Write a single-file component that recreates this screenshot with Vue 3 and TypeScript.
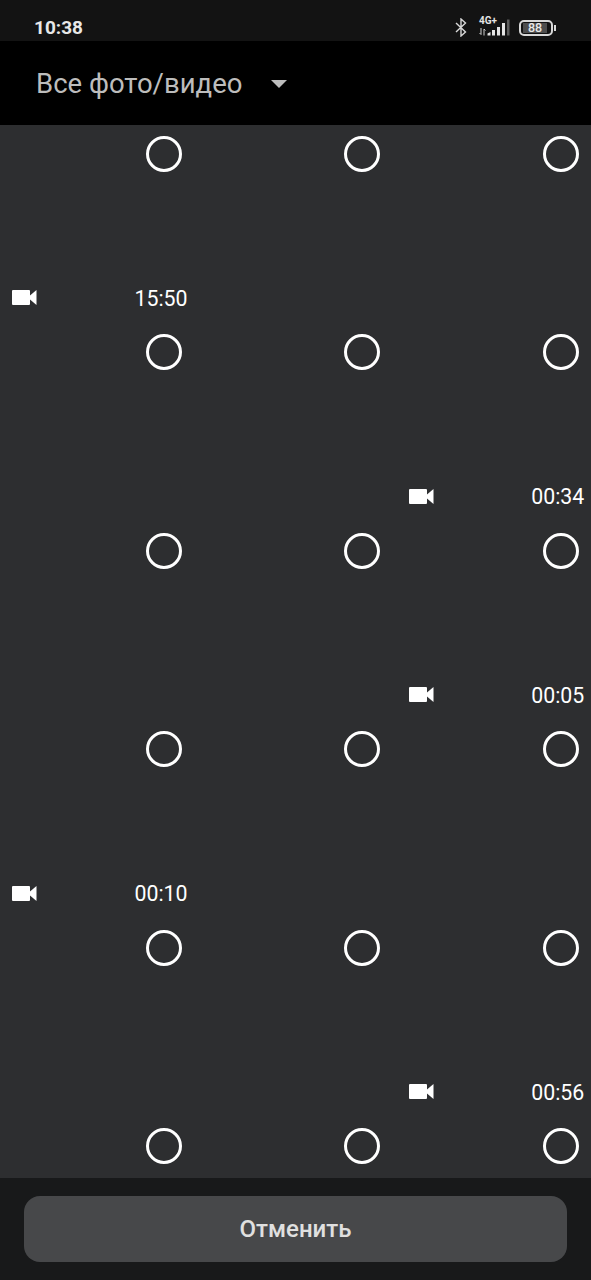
<script setup lang="ts">
interface Cell {
  duration?: string
}

// rows of the picker, only some cells hold a video
const durations: Record<number, string> = {
  0: '15:50',
  5: '00:34',
  8: '00:05',
  9: '00:10',
  14: '00:56',
}

const cells: Cell[] = Array.from({ length: 18 }, (_, i) => ({ duration: durations[i] }))
</script>

<template>
  <div class="screen">
    <div class="status-bar">
      <span class="clock">10:38</span>
      <div class="status-icons">
        <svg class="bt" width="12" height="19" viewBox="0 0 12 19" fill="none" stroke="#d8d8d8" stroke-width="1.4">
          <path d="M1 5l9.500 9L6 18V1l4.500 4L1 14" />
        </svg>
        <div class="network">
          <span class="net-label">4G+</span>
          <svg width="32" height="17" viewBox="0 0 32 17" fill="none">
            <path d="M3 9v6.500M1.500 14l1.500 1.500M6 16.500V10M6 10l1.500 1.500" stroke="#cfcfcf" stroke-width="1" />
            <path d="M9.500 14.500l3-1.500v3.500h-3z" fill="#e4e4e4" />
            <rect x="14" y="11" width="3" height="5.500" fill="#e4e4e4" />
            <rect x="19" y="8" width="3" height="8.500" fill="#e4e4e4" />
            <rect x="24" y="4" width="3" height="12.500" fill="#e4e4e4" />
            <rect x="29" y="0.500" width="2.500" height="16" fill="#5a5a5a" />
          </svg>
        </div>
        <div class="battery">
          <div class="battery-body">
            <span>88</span>
          </div>
          <div class="battery-tip"></div>
        </div>
      </div>
    </div>

    <header class="top-bar">
      <span class="album">Все фото/видео</span>
      <span class="caret"></span>
    </header>

    <main class="gallery">
      <div class="grid">
        <div v-for="(cell, i) in cells" :key="i" class="cell">
          <span class="check"></span>
          <div v-if="cell.duration" class="video-info">
            <svg class="video-icon" width="25" height="15" viewBox="0 0 25 15" fill="#fff">
              <rect x="0" y="0" width="18" height="15" rx="1" />
              <path d="M18 5.500L24.500 0v15L18 9.500z" />
            </svg>
            <span class="duration">{{ cell.duration }}</span>
          </div>
        </div>
      </div>
    </main>

    <footer class="bottom-bar">
      <button type="button" class="cancel">Отменить</button>
    </footer>
  </div>
</template>

<style>
html,
body {
  margin: 0;
  background: #18191a;
}
</style>

<style scoped>
.screen {
  display: flex;
  flex-direction: column;
  width: 591px;
  height: 1280px;
  overflow: hidden;
  font-family: Roboto, "Noto Sans", sans-serif;
}

.status-bar {
  display: flex;
  flex: none;
  align-items: center;
  justify-content: space-between;
  height: 41px;
  padding: 0 35px 0 34px;
  box-sizing: border-box;
  background: #131313;
}

.clock {
  margin-top: 15px;
  color: #e8e8e8;
  font-size: 19px;
  font-weight: 700;
  line-height: 24px;
}

.status-icons {
  display: flex;
  align-items: center;
  margin-top: 14px;
}

.bt {
  margin-right: 11px;
}

.network {
  position: relative;
  margin-right: 9px;
}

.network svg {
  display: block;
}

.net-label {
  position: absolute;
  top: -3px;
  left: 1px;
  color: #e4e4e4;
  font-size: 10px;
  font-weight: 700;
  line-height: 10px;
}

.battery {
  display: flex;
  align-items: center;
}

.battery-body {
  display: flex;
  align-items: center;
  width: 34px;
  height: 16px;
  padding-left: 2px;
  box-sizing: border-box;
  border: 2px solid #d8d8d8;
  border-radius: 5px;
  background: #131313;
}

.battery-body span {
  width: 24px;
  height: 10px;
  background: #4d4d4d;
  color: #e8e8e8;
  font-size: 12.5px;
  font-weight: 500;
  line-height: 10px;
  text-align: center;
}

.battery-tip {
  width: 2px;
  height: 6px;
  margin-left: 1px;
  background: #d8d8d8;
}

.top-bar {
  display: flex;
  flex: none;
  align-items: center;
  gap: 29px;
  height: 84px;
  padding-left: 36px;
  box-sizing: border-box;
  background: #000;
}

.album {
  margin-top: 1px;
  color: #bdbdbd;
  font-size: 27.500px;
  line-height: 32px;
}

.caret {
  width: 0;
  height: 0;
  margin-top: 1px;
  border-top: 8px solid #bdbdbd;
  border-right: 8px solid transparent;
  border-left: 8px solid transparent;
}

.gallery {
  flex: 1;
  min-height: 0;
  overflow: hidden;
  background: #2d2e30;
}

/* the list is scrolled by a pixel or so under the header */
.grid {
  display: grid;
  grid-template-columns: repeat(3, 194px);
  grid-auto-rows: 194px;
  gap: 4.500px 4.400px;
  margin-top: -1.300px;
}

.cell {
  display: flex;
  flex-direction: column;
  justify-content: space-between;
  padding: 12px 6.500px 7px 12px;
  box-sizing: border-box;
}

.check {
  align-self: flex-end;
  width: 36px;
  height: 36px;
  margin-right: 5.500px;
  box-sizing: border-box;
  border: 3px solid #fff;
  border-radius: 50%;
}

.video-info {
  display: flex;
  align-items: center;
  justify-content: space-between;
  height: 24px;
}

.video-icon {
  margin-bottom: 2px;
}

.duration {
  color: #fff;
  font-size: 21.300px;
  line-height: 24px;
}

.bottom-bar {
  flex: none;
  height: 102px;
  padding: 18px 24px;
  box-sizing: border-box;
  background: #18191a;
}

.cancel {
  display: block;
  width: 100%;
  height: 66px;
  border: 0;
  border-radius: 16px;
  background: #47484a;
  color: #e0e0e0;
  font: inherit;
  font-size: 24px;
  font-weight: 500;
}
</style>
